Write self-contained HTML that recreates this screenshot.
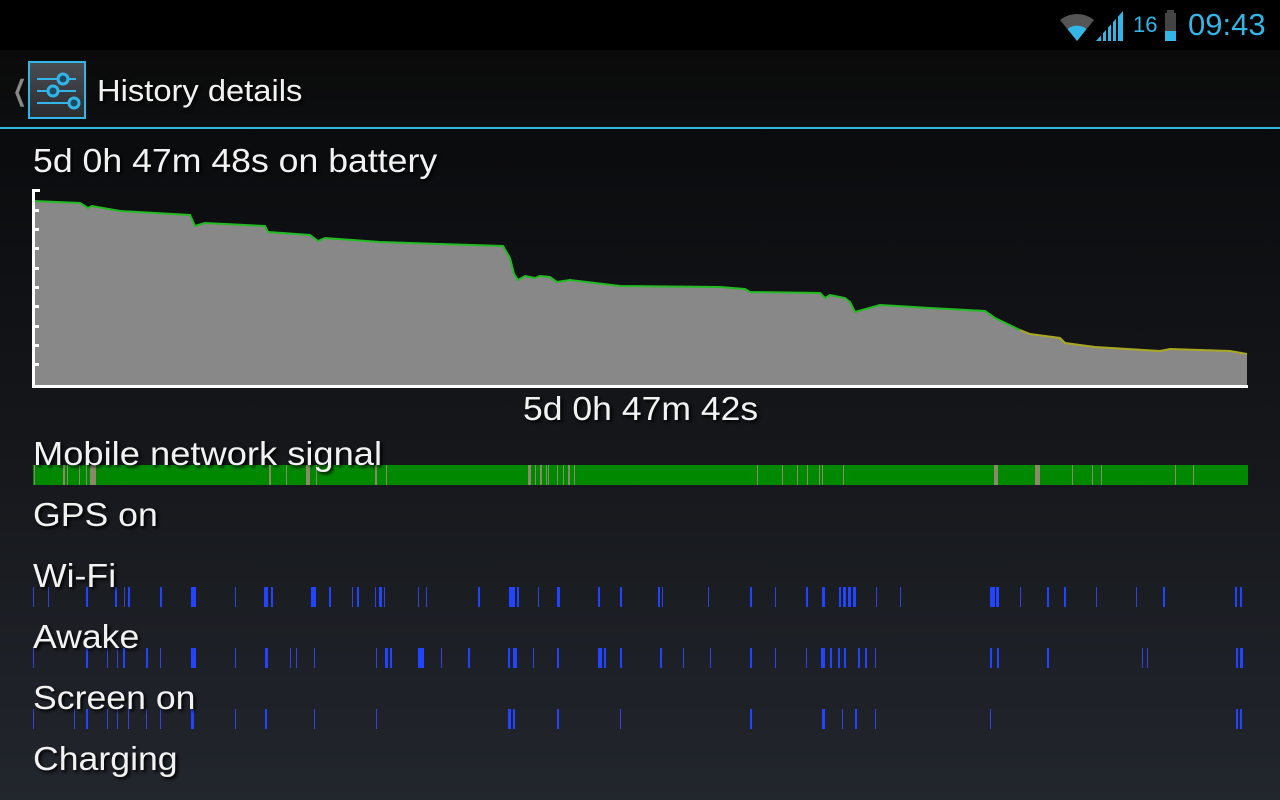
<!DOCTYPE html>
<html><head><meta charset="utf-8"><style>
*{margin:0;padding:0;box-sizing:border-box}
body{width:1280px;height:800px;overflow:hidden;position:relative;font-family:"Liberation Sans",sans-serif;color:#f2f2f2;
background:linear-gradient(#050607 0px,#0b0c0e 150px,#15171b 450px,#22262d 800px)}
.sb{position:absolute;left:0;top:0;width:1280px;height:50px;background:#000}
.ab{position:absolute;left:0;top:50px;width:1280px;height:77px;background:linear-gradient(#0a0a0a,#0d0e10)}
.line{position:absolute;left:0;top:127px;width:1280px;height:2px;background:#33b5e5}
.t{position:absolute;font-size:33px;white-space:nowrap;text-shadow:2px 2px 3px #000;transform-origin:0 0;transform:scaleX(1.08)}
.bar{position:absolute;height:20px;background:#2244ff}
.m{position:absolute;top:465px;height:20px;background:#8a8a6a}
</style></head><body>
<div class="sb"></div>
<svg style="position:absolute;left:1058px;top:8px" width="40" height="34" viewBox="0 0 40 34">
<path d="M2 12 A27 27 0 0 1 36 12 L19 33 Z" fill="#555"/>
<path d="M9.5 21 A15 15 0 0 1 28.5 21 L19 33 Z" fill="#33b5e5"/>
</svg>
<svg style="position:absolute;left:1094px;top:10px" width="32" height="32" viewBox="0 0 32 32">
<path d="M2 31 L29 1 L29 31 Z" fill="#33b5e5"/>
<path d="M8 31 V23 M13 31 V17 M18 31 V12 M23 31 V6" stroke="#000" stroke-width="2"/>
</svg>
<div style="position:absolute;left:1133px;top:12px;font-size:22px;color:#33b5e5">16</div>
<div style="position:absolute;left:1167px;top:10px;width:7px;height:3px;background:#444"></div>
<div style="position:absolute;left:1165px;top:13px;width:11px;height:28px;background:#444"></div>
<div style="position:absolute;left:1165px;top:31px;width:11px;height:10px;background:#33b5e5"></div>
<div style="position:absolute;left:1188px;top:7px;font-size:31px;color:#33b5e5">09:43</div>
<div class="ab"></div>
<div style="position:absolute;left:8px;top:74px;font-size:28px;color:#888;transform:scaleX(0.6)">❮</div>
<svg style="position:absolute;left:28px;top:61px" width="58" height="58" viewBox="0 0 58 58">
<defs><linearGradient id="g" x1="0" y1="0" x2="0" y2="1"><stop offset="0" stop-color="#4a4d52"/><stop offset="1" stop-color="#2a2c30"/></linearGradient></defs>
<rect x="1" y="1" width="56" height="56" fill="url(#g)" stroke="#33b5e5" stroke-width="2"/>
<g stroke="#33b5e5" stroke-width="2"><line x1="9" y1="18" x2="48" y2="18"/><line x1="9" y1="30" x2="48" y2="30"/><line x1="9" y1="42" x2="48" y2="42"/></g>
<g fill="#1a4a66" stroke="#33b5e5" stroke-width="3"><circle cx="35" cy="18" r="5"/><circle cx="25" cy="30" r="5"/><circle cx="46" cy="42" r="5"/></g>
</svg>
<div class="t" style="left:97px;top:73px;font-size:31px;transform:scaleX(1.055)">History details</div>
<div class="line"></div>
<div class="t" style="left:33px;top:142px">5d 0h 47m 48s on battery</div>
<svg style="position:absolute;left:0;top:0" width="1280" height="400">
<polygon fill="#888" points="34,201 80,203 88,208 92,206 120,211 190,215 195,226 205,223 265,226 268,232 310,235 318,241 325,238 380,242 440,244 503,246 510,258 514,274 518,280 525,276 535,278 540,276 550,277 557,282 570,280 620,286 720,287 745,289 750,292 820,293 825,298 830,295 845,298 850,302 855,312 880,305 930,308 985,311 995,318 1020,330 1030,334 1060,338 1065,343 1095,347 1160,351 1170,349 1230,351 1247,354 1247,386 34,386"/>
<polyline fill="none" stroke="#22bb22" stroke-width="2" points="34,201 80,203 88,208 92,206 120,211 190,215 195,226 205,223 265,226 268,232 310,235 318,241 325,238 380,242 440,244 503,246 510,258 514,274 518,280 525,276 535,278 540,276 550,277 557,282 570,280 620,286 720,287 745,289 750,292 820,293 825,298 830,295 845,298 850,302 855,312 880,305 930,308 985,311 995,318 1020,330"/>
<polyline fill="none" stroke="#a8a822" stroke-width="2" points="1020,330 1030,334 1060,338 1065,343 1095,347 1160,351 1170,349 1230,351 1247,354"/>
<g fill="#fff"><rect x="32" y="189" width="3" height="199"/><rect x="32" y="385" width="1216" height="3"/>
<rect x="32" y="189" width="8" height="3"/><rect x="32" y="209" width="7" height="3"/><rect x="32" y="228" width="7" height="3"/><rect x="32" y="247" width="7" height="3"/><rect x="32" y="267" width="7" height="3"/><rect x="32" y="286" width="7" height="3"/><rect x="32" y="305" width="7" height="3"/><rect x="32" y="325" width="7" height="3"/><rect x="32" y="344" width="7" height="3"/><rect x="32" y="363" width="7" height="3"/></g>
</svg>
<div class="t" style="left:523px;top:390px;transform:scaleX(1.077)">5d 0h 47m 42s</div>
<div style="position:absolute;left:33px;top:465px;width:1215px;height:20px;background:#008800"></div>
<div id="bars"></div>
<div class="t" style="left:33px;top:435px;transform:scaleX(1.10)">Mobile network signal</div>
<div class="t" style="left:33px;top:496px">GPS on</div>
<div class="t" style="left:33px;top:557px">Wi-Fi</div>
<div class="t" style="left:33px;top:618px">Awake</div>
<div class="t" style="left:33px;top:679px">Screen on</div>
<div class="t" style="left:33px;top:740px">Charging</div>
<script>
var W=[33,1,48,1,86,2,115,2,124,1,128,2,160,2,191,5,235,1,264,4,271,2,311,5,329,2,352,1,357,2,375,1,379,3,384,1,418,1,426,1,478,2,509,6,517,2,538,1,557,3,598,2,620,2,658,2,662,1,708,1,750,2,775,1,806,2,822,3,839,2,843,3,848,3,853,3,876,1,900,1,990,5,996,3,1020,1,1047,2,1064,2,1096,1,1136,1,1163,2,1235,2,1240,2];
var A=[33,1,86,2,107,1,117,1,123,2,146,2,160,1,191,5,235,1,265,3,290,1,296,1,314,1,376,1,385,3,390,2,418,6,441,1,468,2,508,2,513,4,533,1,557,2,598,4,604,2,620,2,660,2,683,1,710,1,750,2,775,1,806,1,821,4,830,2,838,2,844,2,858,2,865,2,875,1,990,2,997,2,1047,2,1142,1,1147,1,1236,2,1240,3];
var S=[33,1,74,1,86,2,107,1,117,1,128,1,146,1,160,1,191,3,235,1,265,2,314,1,376,1,508,3,513,2,557,2,620,1,750,2,822,3,842,1,855,2,875,1,990,1,1236,2,1240,2];
var M=[34,1,63,2,67,1,79,1,86,1,90,6,269,2,286,1,306,4,316,1,375,2,386,1,528,3,535,1,540,2,546,1,548,1,557,1,563,1,568,2,574,1,757,1,782,1,797,1,807,1,819,1,822,1,843,1,994,4,1035,5,1072,1,1092,1,1101,1,1175,1,1193,1];
var h='';
function add(a,top){for(var i=0;i<a.length;i+=2){var c=a[i+1]>1?'#2244ff':'#3344dd';h+='<div class="bar" style="left:'+a[i]+'px;top:'+top+'px;width:'+a[i+1]+'px;background:'+c+'"></div>';}}
add(W,587);add(A,648);add(S,709);
for(var i=0;i<M.length;i+=2)h+='<div class="m" style="left:'+M[i]+'px;width:'+M[i+1]+'px"></div>';
document.getElementById('bars').innerHTML=h;
</script>
</body></html>
